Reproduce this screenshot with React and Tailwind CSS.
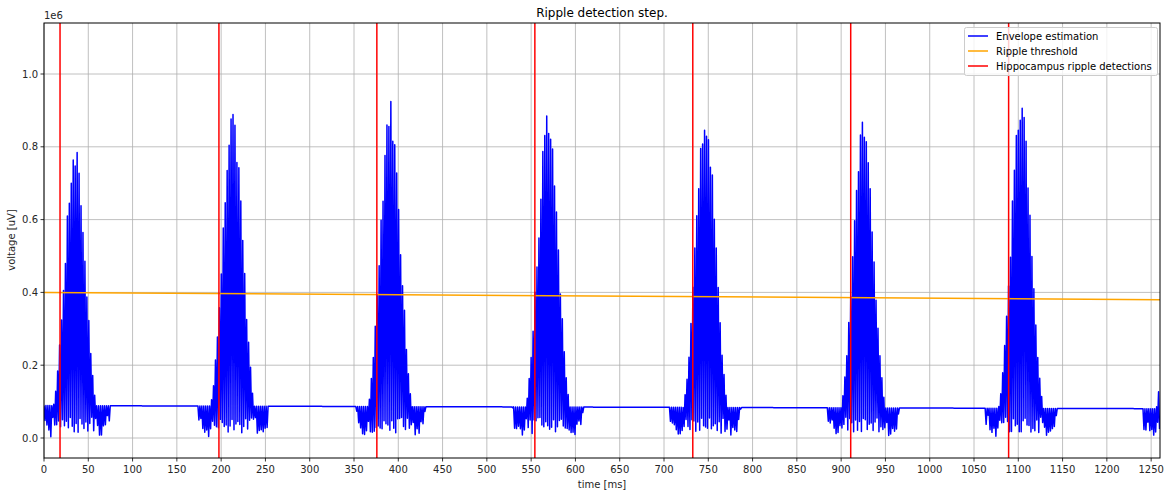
import React from "react";

const L = 44, R = 1160, T = 23, B = 458;
const sx = (t) => L + (t / 1260) * (R - L);
const sy = (v) => 438 - v * 364;

function rng(seed) {
  let s = seed;
  return () => {
    s = (s * 1664525 + 1013904223) % 4294967296;
    return s / 4294967296;
  };
}

const centers = [35, 213, 391, 569, 747, 925, 1103, 1281];
const peaks = [0.82, 0.91, 0.93, 0.905, 0.92, 0.905, 0.93, 0.9];

function buildPath() {
  const r = rng(7);
  const pts = [];
  let k = 0;
  for (let t = 0; t <= 1260; t += 1.1, k++) {
    const base = 0.089 - (0.0085 * t) / 1260;
    let ci = 0;
    let best = 1e9;
    centers.forEach((c, i) => {
      if (Math.abs(t - c) < Math.abs(best)) {
        best = t - c;
        ci = i;
      }
    });
    const d = best;
    const ad = Math.abs(d);
    let v;
    if (ad > 40) {
      v = base;
    } else if (k % 2 === 0) {
      const g = peaks[ci] * Math.exp(-(d * d) / (2 * 11.5 * 11.5)) * (0.9 + 0.1 * r());
      v = Math.max(base, g);
    } else {
      if (ad < 27) v = 0.012 + 0.045 * r();
      else v = base * (0.1 + 0.9 * ((ad - 27) / 13)) * (0.3 + 0.7 * r());
    }
    pts.push(`${sx(t).toFixed(2)},${sy(v).toFixed(2)}`);
  }
  return "M" + pts.join(" L");
}

const path = buildPath();
const xticks = Array.from({ length: 26 }, (_, i) => i * 50);
const yticks = [0, 0.2, 0.4, 0.6, 0.8, 1.0];
const detections = [18.1, 197.5, 375.8, 554.2, 732.5, 910.8, 1089.1];

export default function App() {
  return (
    <div className="w-[1171px] h-[496px] bg-white font-['DejaVu_Sans',sans-serif]">
      <svg width="1171" height="496" viewBox="0 0 1171 496" fontFamily="DejaVu Sans, sans-serif">
        <defs>
          <clipPath id="ax">
            <rect x={L} y={T} width={R - L} height={B - T} />
          </clipPath>
        </defs>
        <g stroke="#b0b0b0" strokeWidth="0.8">
          {xticks.map((t) => (
            <line key={t} x1={sx(t)} x2={sx(t)} y1={T} y2={B} />
          ))}
          {yticks.map((v) => (
            <line key={v} x1={L} x2={R} y1={sy(v)} y2={sy(v)} />
          ))}
        </g>
        <g clipPath="url(#ax)">
          <path d={path} fill="none" stroke="#0000ff" strokeWidth="1.5" strokeLinejoin="round" />
          <line x1={sx(0)} x2={sx(1260)} y1={sy(0.4)} y2={sy(0.38)} stroke="#ffa500" strokeWidth="1.5" />
          {detections.map((t) => (
            <line key={t} x1={sx(t)} x2={sx(t)} y1={T} y2={B} stroke="#ff0000" strokeWidth="1.5" />
          ))}
        </g>
        <rect x={L} y={T} width={R - L} height={B - T} fill="none" stroke="#000" strokeWidth="1" />
        <g stroke="#000" strokeWidth="0.8">
          {xticks.map((t) => (
            <line key={t} x1={sx(t)} x2={sx(t)} y1={B} y2={B + 3.5} />
          ))}
          {yticks.map((v) => (
            <line key={v} x1={L - 3.5} x2={L} y1={sy(v)} y2={sy(v)} />
          ))}
        </g>
        <g fontSize="10" fill="#262626">
          {xticks.map((t) => (
            <text key={t} x={sx(t)} y={B + 15} textAnchor="middle">{t}</text>
          ))}
          {yticks.map((v) => (
            <text key={v} x={L - 6} y={sy(v) + 3.5} textAnchor="end">{v.toFixed(1)}</text>
          ))}
          <text x={L} y={19}>1e6</text>
          <text x={602} y={488} textAnchor="middle">time [ms]</text>
          <text x={15} y={240} textAnchor="middle" transform="rotate(-90 15 240)">voltage [uV]</text>
        </g>
        <text x={602} y={17} textAnchor="middle" fontSize="12" fill="#000">Ripple detection step.</text>
        <g>
          <rect x={964.5} y={27.5} width={193} height={48} rx="2" fill="#fff" fillOpacity="0.8" stroke="#ccc" strokeWidth="1" />
          <line x1={968} x2={988} y1={36} y2={36} stroke="#0000ff" strokeWidth="1.5" />
          <line x1={968} x2={988} y1={51} y2={51} stroke="#ffa500" strokeWidth="1.5" />
          <line x1={968} x2={988} y1={66} y2={66} stroke="#ff0000" strokeWidth="1.5" />
          <g fontSize="10" fill="#000">
            <text x={996} y={39.5}>Envelope estimation</text>
            <text x={996} y={54.5}>Ripple threshold</text>
            <text x={996} y={69.5}>Hippocampus ripple detections</text>
          </g>
        </g>
      </svg>
    </div>
  );
}
